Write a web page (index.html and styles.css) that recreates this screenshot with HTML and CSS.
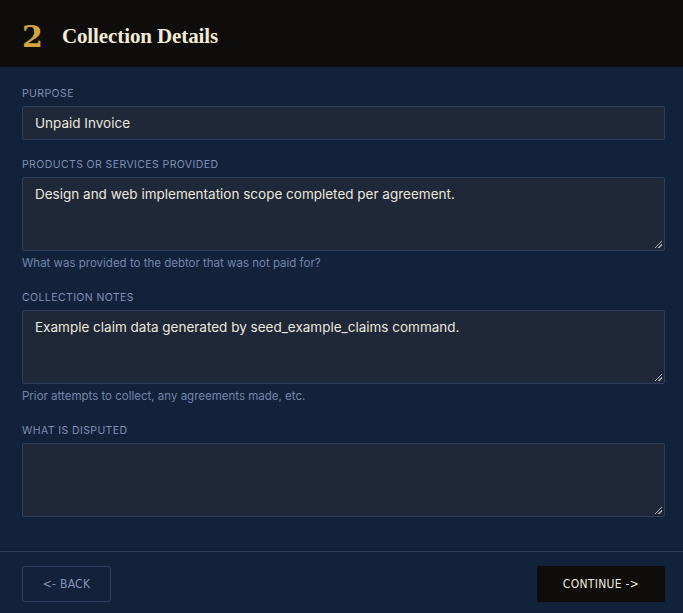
FILE: index.html
```html
<!DOCTYPE html>
<html lang="en">
<head>
<meta charset="utf-8">
<title>Collection Details</title>
<link rel="stylesheet" href="styles.css">
</head>
<body>
<div class="card">
  <header class="head">
    <span class="step">2</span>
    <h1 class="title">Collection Details</h1>
  </header>
  <main class="form">
    <div class="field">
      <label class="label">Purpose</label>
      <div class="input">Unpaid Invoice</div>
    </div>
    <div class="field">
      <label class="label">Products or services provided</label>
      <div class="textarea">Design and web implementation scope completed per agreement.<span class="grip"></span></div>
      <p class="help">What was provided to the debtor that was not paid for?</p>
    </div>
    <div class="field">
      <label class="label">Collection notes</label>
      <div class="textarea">Example claim data generated by seed_example_claims command.<span class="grip"></span></div>
      <p class="help">Prior attempts to collect, any agreements made, etc.</p>
    </div>
    <div class="field">
      <label class="label">What is disputed</label>
      <div class="textarea"><span class="grip"></span></div>
    </div>
  </main>
  <footer class="foot">
    <button class="btn btn-back">&lt;- Back</button>
    <button class="btn btn-next">Continue -&gt;</button>
  </footer>
</div>
</body>
</html>
```
FILE: styles.css
```css
* { box-sizing: border-box; }
html, body { margin: 0; padding: 0; }
body {
  background: #13223b;
  font-family: Inter, "Noto Sans", sans-serif;
  color: #e8e4da;
}
.card { width: 683px; }
.head {
  background: #0f0d0b;
  height: 67px;
  display: flex;
  align-items: center;
  padding: 6px 22px 0;
  gap: 19px;
}
.step {
  font-family: "DejaVu Serif", "Liberation Serif", serif;
  font-weight: bold;
  font-size: 30px;
  color: #d3a53c;
  line-height: 1;
  margin-top: 1px;
}
.title {
  margin: 0;
  font-family: "Liberation Serif", "DejaVu Serif", serif;
  font-weight: bold;
  font-size: 21px;
  color: #f2ead6;
  letter-spacing: -0.1px;
}
.form {
  padding: 20px 18px 34px 22px;
  display: flex;
  flex-direction: column;
  gap: 18px;
}
.field { display: flex; flex-direction: column; }
.label {
  font-size: 10.5px;
  line-height: 14px;
  text-transform: uppercase;
  letter-spacing: 0.4px;
  color: #7e90b3;
  margin-bottom: 5px;
}
.input, .textarea {
  background: #1f2839;
  border: 1px solid #2d3d5b;
  border-radius: 2px;
  font-size: 13.5px;
  color: #ece7dc;
  padding: 0 12px;
}
.input { height: 34px; display: flex; align-items: center; }
.textarea {
  height: 74px;
  padding-top: 7px;
  line-height: 18px;
  position: relative;
}
.grip {
  position: absolute;
  right: 2px;
  bottom: 2px;
  width: 7px;
  height: 7px;
  background: linear-gradient(135deg, transparent 0 45%, #a9adb5 45% 55%, transparent 55% 70%, #a9adb5 70% 82%, transparent 82%);
}
.help {
  margin: 4px 0 2px;
  font-size: 11.5px;
  line-height: 16px;
  color: #7286aa;
}
.foot {
  border-top: 1px solid #2c3c5a;
  padding: 14px 18px 12px 22px;
  display: flex;
  justify-content: space-between;
}
.btn {
  height: 36px;
  font-family: "DejaVu Sans Condensed", "Liberation Sans", sans-serif;
  font-size: 12px;
  text-transform: uppercase;
  letter-spacing: 0.3px;
  border-radius: 2px;
  cursor: pointer;
}
.btn-back {
  width: 89px;
  background: transparent;
  border: 1px solid #2e3f5f;
  color: #8295b8;
}
.btn-next {
  width: 128px;
  background: #0f0d0b;
  border: 1px solid #0f0d0b;
  color: #f1ebdd;
}
```
